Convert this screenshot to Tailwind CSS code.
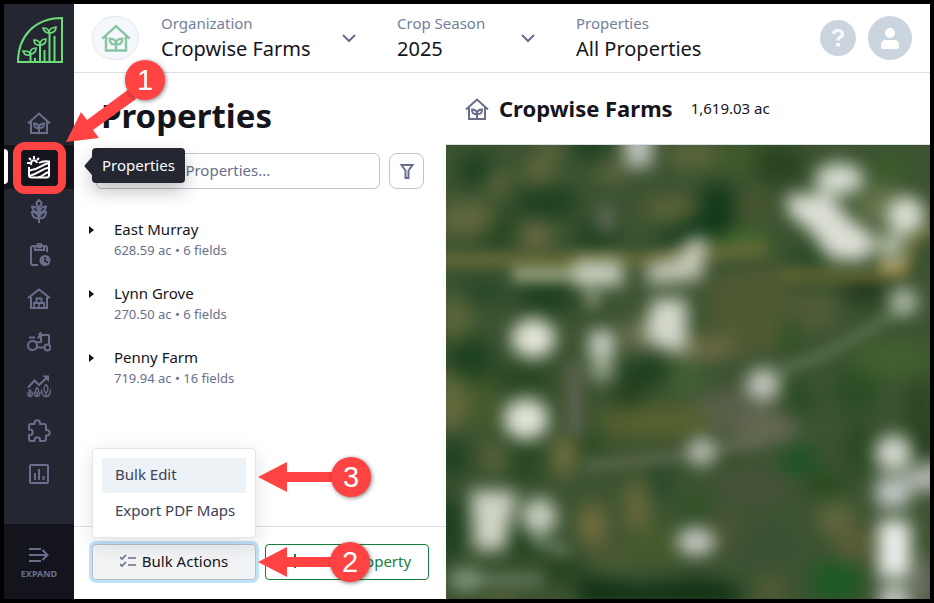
<!DOCTYPE html>
<html lang="en">
<head>
    <meta charset="UTF-8">
    <meta name="viewport" content="width=device-width, initial-scale=1.0">
    <title>Cropwise - Properties</title>
    <script src="https://cdn.jsdelivr.net/npm/@tailwindcss/browser@4"></script>
</head>
<body class="flex h-screen overflow-hidden border-4 border-black bg-white font-['Noto_Sans',sans-serif] text-[15px] text-[#14151c]">
    <!-- Shared icons -->
    <svg class="hidden">
        <symbol id="home" viewBox="0 0 24 24">
            <g fill="none" stroke="currentColor" stroke-width="2">
                <path d="M1 12.500 12 2.500l11 10M4 10.500V22h16V10.500"/>
                <path d="M12 22v-5M12 17c-4 .5-5-1.500-5-4.500 3.500 0 5 1 5 4.500zM12 17c4 .5 5-1.500 5-4.500-3.500 0-5 1-5 4.500z"/>
            </g>
        </symbol>
        <symbol id="arrow-left" viewBox="0 0 90 30">
            <path d="M0 15 29 0v10h50v10H29v10z" fill="currentColor"/>
        </symbol>
    </svg>

    <!-- Sidebar -->
    <nav class="flex w-[70px] shrink-0 flex-col bg-[#242631] text-[#696f8b]">
        <a href="#" aria-label="Cropwise" class="flex h-[97px] justify-center pt-3">
            <svg class="size-12" viewBox="0 0 48 48" fill="none" stroke="#6bdc7a" stroke-width="2">
                <path d="M3 46C3 20 20 2 47 2v44z"/>
                <path d="M15.500 46V37M20 46v-4M25 46V27M29.500 46V34M34.500 46V17M39.500 46V20" stroke-width="2"/>
                <path d="M15 39c-4 1-6-1-7-4 4 0 7 0 7 4zM15 38c0-4 2-6 6-6 0 4-2 6-6 6zM25 29c-4 1-6-2-6-5 4 0 6 1 6 5zM25 29c0-4 2-6 6-6 0 4-2 6-6 6zM34 17c-4 0-5-2-6-5 4 0 6 1 6 5zM34 17c0-4 2-5 7-6 0 4-2 6-7 6z" stroke-width="1.700"/>
            </svg>
        </a>
        <a href="#" aria-label="Home" class="flex h-11 items-center justify-center"><svg class="size-6"><use href="#home"/></svg></a>

        <div class="relative h-11">
            <a href="#" aria-label="Properties" aria-current="page" class="flex h-11 items-center justify-center bg-[#14151c] text-white">
                <span class="absolute top-1 left-0 h-[35px] w-1 rounded-r bg-white"></span>
                <svg class="size-6" viewBox="0 0 24 24" fill="none" stroke="currentColor" stroke-width="2">
                    <path d="M2 12v8q0 2.500 2.500 2.500h15q2.500 0 2.500-2.500V6.500q-6-1-10 1.500"/>
                    <path d="M2.500 15.500C12 14.500 14 9.500 22 8M2.500 21C12 18.500 14 14 22 12.500M11 22.500c5-1 7-5 11-5.500"/>
                    <path d="M4.500 10a3 3 0 1 1 5.500-2"/>
                    <path d="M7 1v3M0 8h3M2 3l2 2M12 3l-2 2" stroke-width="2"/>
                </svg>
            </a>
            <div role="tooltip" class="absolute top-[3px] left-[88px] z-20 flex h-[35px] items-center rounded bg-[#242631] px-[10px] text-white shadow-[0_8px_18px_rgba(0,0,0,0.25)]">
                <svg class="absolute top-2 -left-2 h-5 w-2" viewBox="0 0 8 20" fill="#242631"><path d="M8 1 1 9q-1 1 0 2l7 8z"/></svg>
                Properties
            </div>
            <!-- Step 1 -->
            <div class="absolute -top-[3px] left-[9px] z-30 h-[52px] w-[53px] rounded-xl border-8 border-[#ff4343]"></div>
            <svg class="absolute -top-[90px] left-[60px] z-30 h-[90px] w-[106px]" viewBox="0 0 106 90" fill="#ff4343">
                <path d="M2 87 17 57l6 8 42-31 7 10-43 31 6 8z"/>
                <circle cx="81" cy="25" r="20" class="drop-shadow-[1px_1px_2px_rgba(0,0,0,0.5)]"/>
                <text x="81" y="35" text-anchor="middle" fill="white" class="font-['Liberation_Sans',sans-serif] text-[29px]">1</text>
            </svg>
        </div>

        <a href="#" aria-label="Crops" class="flex h-11 items-center justify-center">
            <svg class="size-6" viewBox="0 0 24 24" fill="none" stroke="currentColor" stroke-width="2">
                <path d="M12 24V8M12 8q-5-3 0-7 5 4 0 7M12 13.500q-6 0-7-6 6 0 7 6q1-6 7-6-1 6-7 6M12 19.500q-7 0-7-6.500 6 0 7 6.500q1-6.500 7-6.500 0 6.500-7 6.500"/>
            </svg>
        </a>
        <a href="#" aria-label="Tasks" class="flex h-11 items-center justify-center">
            <svg class="size-6" viewBox="0 0 24 24" fill="none" stroke="currentColor" stroke-width="2">
                <path d="M11 22H6q-2 0-2-2V5q0-2 2-2h12q2 0 2 2v4"/>
                <path d="M8 3v4h9V3"/><circle cx="12.500" cy="2.500" r="2"/>
                <circle cx="18" cy="17.500" r="5.500" fill="currentColor" stroke="none"/>
                <path d="M18 14v4l3 1.500" stroke="#242631" stroke-width="1.500"/>
            </svg>
        </a>
        <a href="#" aria-label="Inventory" class="flex h-11 items-center justify-center">
            <svg class="size-6" viewBox="0 0 24 24" fill="none" stroke="currentColor" stroke-width="2">
                <path d="M1 11 12 2.500l11 8.500M4 10v11h16V10"/>
                <path d="M7 21v-5h10v5M9.500 16v-4.500h5V16M12 16v5" stroke-width="1.800"/>
            </svg>
        </a>
        <a href="#" aria-label="Equipment" class="flex h-11 items-center justify-center">
            <svg class="size-6" viewBox="0 0 24 24" fill="none" stroke="currentColor" stroke-width="2">
                <circle cx="5.500" cy="14.500" r="4.500"/><circle cx="20.500" cy="16.500" r="3"/>
                <path d="M2 6.500h6M7 9.500q2 2.500 7 1.500V4h7q1 0 1 1v8M10 16.500h7.500M10.500 6.500h2V3l2-1.500"/>
            </svg>
        </a>
        <a href="#" aria-label="Yield" class="flex h-11 items-center justify-center">
            <svg class="size-6" viewBox="0 0 24 24" fill="none" stroke="currentColor" stroke-width="2">
                <path d="m1 12.500 6.500-7L12 10l8.500-8"/><path d="M15.500.500H22V7z" fill="currentColor" stroke="none"/>
                <path d="M3 22v-3M3 14.500q-2 2 0 5 2-3 0-5M.5 17.500q0 4 2.500 4t2.500-4M10 22v-4M10 12.500q-3 3 0 7 3-4 0-7M7 16.500q0 5 3 5t3-5M19 22v-4M19 9.500q-4 4 0 9 4-5 0-9M14.500 14.500q0 7 4.500 7t4.500-7" stroke-width="1.300"/>
            </svg>
        </a>
        <a href="#" aria-label="Integrations" class="flex h-11 items-center justify-center">
            <svg class="size-6" viewBox="0 0 24 24" fill="none" stroke="currentColor" stroke-width="2" stroke-linejoin="round">
                <path d="M7.500 5V4a2.700 2.700 0 0 1 5.400 0v1H17q2 0 2 2v4h1a2.700 2.700 0 0 1 0 5.400h-1V20q0 2-2 2h-4v-1a2.700 2.700 0 0 0-5.400 0v1H4q-2 0-2-2v-4h1a2.700 2.700 0 0 0 0-5.400H2V7q0-2 2-2z"/>
            </svg>
        </a>
        <a href="#" aria-label="Reports" class="flex h-11 items-center justify-center">
            <svg class="size-6" viewBox="0 0 24 24" fill="none" stroke="currentColor" stroke-width="2">
                <rect x="3" y="2" width="18" height="18" rx="1"/><path d="M8 17v-7M12 17V6M16.500 17v-4"/>
            </svg>
        </a>
        <button class="mt-auto flex h-[75px] flex-col items-center bg-[#14151c] pt-[21px] text-[9px] leading-3 font-bold">
            <svg class="mb-[3px] h-5 w-6" viewBox="0 0 24 20" fill="none" stroke="currentColor" stroke-width="2">
                <path d="M2 4h12M2 10h18M2 16h12M15.500 5l5 5-5 5"/>
            </svg>
            EXPAND
        </button>
    </nav>

    <div class="flex min-w-0 flex-1 flex-col">
        <!-- Top bar -->
        <header class="flex h-[69px] shrink-0 items-center border-b border-[#dddfe6] pr-[18px] pl-[18px]">
            <div class="flex h-11 w-[47px] shrink-0 items-center justify-center rounded-full border border-[#e3e7ef] bg-[#f4f7fc] text-[#8cc5a2]">
                <svg class="size-[30px]"><use href="#home"/></svg>
            </div>
            <button class="ml-[22px] flex w-[196px] items-center justify-between text-left">
                <span><span class="block leading-[22px] text-[#74809a]">Organization</span><span class="block text-[20px] leading-[30px]">Cropwise Farms</span></span>
                <svg class="h-4 w-4" viewBox="0 0 16 16" fill="none" stroke="#696f8b" stroke-width="2"><path d="m2 5 6 6 6-6"/></svg>
            </button>
            <button class="ml-10 flex w-[139px] items-center justify-between text-left">
                <span><span class="block leading-[22px] text-[#74809a]">Crop Season</span><span class="block text-[20px] leading-[30px]">2025</span></span>
                <svg class="h-4 w-4" viewBox="0 0 16 16" fill="none" stroke="#696f8b" stroke-width="2"><path d="m2 5 6 6 6-6"/></svg>
            </button>
            <button class="ml-10 text-left">
                <span class="block leading-[22px] text-[#74809a]">Properties</span><span class="block text-[20px] leading-[30px]">All Properties</span>
            </button>
            <button aria-label="Help" class="ml-auto flex size-9 items-center justify-center rounded-full bg-[#cbd5e0]">
                <svg class="size-5" viewBox="0 0 20 20" fill="none" stroke="#f7fafc" stroke-width="3.200"><path d="M5.500 6q.5-3.500 4.500-3.500t4.500 3.500q0 2-2.300 3.200T10 12.500"/><path d="M10 15v3.500" stroke-width="4"/></svg>
            </button>
            <button aria-label="Account" class="ml-3 flex size-11 items-center justify-center rounded-full bg-[#cbd5e0]">
                <svg class="size-6" viewBox="0 0 24 24" fill="white"><circle cx="12" cy="7" r="5"/><path d="M3 20v-1q0-5 5-5h8q5 0 5 5v1q0 3-2 3H5q-2 0-2-3z"/></svg>
            </button>
        </header>

        <div class="flex min-h-0 flex-1">
            <!-- Property list -->
            <section class="flex w-[372px] shrink-0 flex-col">
                <h1 class="pt-5 pl-[27px] text-[33px] leading-[46px] font-bold">Properties</h1>
                <div class="mt-[14px] flex gap-[9px] pr-[22px] pl-[22px]">
                    <input type="text" aria-label="Search properties" placeholder="Search Properties..." class="h-9 min-w-0 flex-1 rounded-md border border-[#bfc3d2] pb-[2px] pl-[37px] placeholder:text-[#696f8b]">
                    <button aria-label="Filter" class="flex h-9 w-[35px] items-center justify-center rounded-lg border border-[#bfc3d2]">
                        <svg class="size-4" viewBox="0 0 16 16" fill="none" stroke="#696f8b" stroke-width="2"><path d="M2.500 2h11L9.500 7.500V15h-3V7.500z"/></svg>
                    </button>
                </div>
                <ul class="mt-[29px] flex flex-col gap-[22px] pl-[14px]">
                    <li class="flex gap-[18px]">
                        <svg class="mt-2 h-2 w-2" viewBox="0 0 8 8"><path d="M1 0l5 4-5 4z" fill="#14151c"/></svg>
                        <div><p class="leading-[22px]">East Murray</p><p class="text-[13px] leading-5 text-[#696f8b]">628.59 ac • 6 fields</p></div>
                    </li>
                    <li class="flex gap-[18px]">
                        <svg class="mt-2 h-2 w-2" viewBox="0 0 8 8"><path d="M1 0l5 4-5 4z" fill="#14151c"/></svg>
                        <div><p class="leading-[22px]">Lynn Grove</p><p class="text-[13px] leading-5 text-[#696f8b]">270.50 ac • 6 fields</p></div>
                    </li>
                    <li class="flex gap-[18px]">
                        <svg class="mt-2 h-2 w-2" viewBox="0 0 8 8"><path d="M1 0l5 4-5 4z" fill="#14151c"/></svg>
                        <div><p class="leading-[22px]">Penny Farm</p><p class="text-[13px] leading-5 text-[#696f8b]">719.94 ac • 16 fields</p></div>
                    </li>
                </ul>

                <div class="mt-auto grid h-[73px] grid-cols-2 items-start gap-[9px] border-t border-[#dddfe6] pt-[17px] pr-[17px] pl-[18px]">
                    <div class="relative">
                        <button aria-expanded="true" class="flex h-9 w-full items-center justify-center gap-[6px] rounded border border-[#b9bfcd] bg-[#f2f3f5] pb-[2px] ring-3 ring-[#bee3f8]">
                            <svg class="h-4 w-4" viewBox="0 0 16 16" fill="none" stroke="#696f8b" stroke-width="1.600"><path d="m0 4 2 2 4-4M0 11l2 2 4-4M8 5h8M8 12h8"/></svg>
                            Bulk Actions
                        </button>
                        <div role="menu" class="absolute bottom-[42px] left-0 z-10 w-full rounded border border-[#e2e5eb] bg-white px-[9px] pt-[9px] pb-2 text-[#3c4256] shadow-[0_6px_22px_rgba(0,0,0,0.12)]">
                            <button role="menuitem" class="flex h-[35px] w-full items-center bg-[#edf2f7] pb-[2px] pl-[13px]">Bulk Edit</button>
                            <button role="menuitem" class="flex h-9 w-full items-center pb-[2px] pl-[13px] whitespace-nowrap">Export PDF Maps</button>
                        </div>
                        <!-- Step 3 -->
                        <div class="absolute -top-[87px] left-[166px] z-30 flex h-10 items-center text-[#ff4343]">
                            <svg class="h-[30px] w-[90px]"><use href="#arrow-left"/></svg>
                            <span class="-ml-[17px] flex size-10 items-center justify-center rounded-full bg-[#ff4343] font-['Liberation_Sans',sans-serif] text-[29px] leading-9 text-white shadow-[1px_1px_4px_rgba(0,0,0,0.5)]">3</span>
                        </div>
                        <!-- Step 2 -->
                        <div class="absolute -top-[2px] left-[166px] z-30 flex h-10 items-center text-[#ff4343]">
                            <svg class="h-[30px] w-[90px]"><use href="#arrow-left"/></svg>
                            <span class="-ml-[18px] flex size-10 items-center justify-center rounded-full bg-[#ff4343] font-['Liberation_Sans',sans-serif] text-[29px] leading-9 text-white shadow-[1px_1px_4px_rgba(0,0,0,0.5)]">2</span>
                        </div>
                    </div>
                    <button class="flex h-9 items-center justify-center gap-3 rounded border border-[#14803c] pb-[2px] pl-1 text-[#14803c]">
                        <svg class="h-4 w-4" viewBox="0 0 16 16" stroke="currentColor" stroke-width="2"><path d="M8 1v14M1 8h14"/></svg>
                        New Property
                    </button>
                </div>
            </section>

            <!-- Map -->
            <main class="flex min-w-0 flex-1 flex-col">
                <div class="flex h-[72px] shrink-0 items-center border-b border-[#dddfe6] pl-[19px]">
                    <svg class="size-6 text-[#696f8b]"><use href="#home"/></svg>
                    <h2 class="ml-[10px] text-[22px] font-bold">Cropwise Farms</h2>
                    <span class="ml-[18px]">1,619.03 ac</span>
                </div>
                <svg role="img" aria-label="Satellite map" class="min-h-0 w-full flex-1 bg-[#39512f]" viewBox="0 0 1452 1362" preserveAspectRatio="xMidYMid slice">
                    <defs>
                        <filter id="soft" x="-20%" y="-20%" width="140%" height="140%" color-interpolation-filters="sRGB"><feGaussianBlur stdDeviation="28"/></filter>
                        <filter id="road" x="-20%" y="-20%" width="140%" height="140%" color-interpolation-filters="sRGB"><feGaussianBlur stdDeviation="19"/></filter>
                        <filter id="bright" x="-20%" y="-20%" width="140%" height="140%" color-interpolation-filters="sRGB"><feGaussianBlur stdDeviation="26"/></filter>
                    </defs>
                    <rect width="1452" height="1362" fill="#3d5331"/>
                    <g filter="url(#soft)">
                        <!-- woodland -->
                        <g fill="#1c401f">
                            <ellipse cx="90" cy="75" rx="55" ry="50"/><ellipse cx="430" cy="5" rx="60" ry="40"/>
                            <path d="M770 120h100v120l-60 50H600l160-80z" fill="#12381a"/>
                            <ellipse cx="300" cy="170" rx="100" ry="50"/><ellipse cx="450" cy="270" rx="70" ry="35"/>
                            <ellipse cx="150" cy="250" rx="60" ry="60" fill="#24451f"/>
                            <ellipse cx="110" cy="440" rx="80" ry="40" fill="#27482a"/><ellipse cx="300" cy="460" rx="90" ry="45"/>
                            <ellipse cx="70" cy="640" rx="70" ry="70"/><ellipse cx="230" cy="700" rx="90" ry="40" fill="#264620"/>
                            <ellipse cx="600" cy="680" rx="80" ry="45"/><ellipse cx="550" cy="750" rx="50" ry="50" fill="#25401e"/>
                            <ellipse cx="20" cy="940" rx="45" ry="60"/><ellipse cx="230" cy="950" rx="70" ry="70" fill="#294922"/>
                            <ellipse cx="10" cy="1150" rx="50" ry="100"/><ellipse cx="230" cy="1190" rx="60" ry="60" fill="#264522"/>
                            <path d="M400 1290l180 30 180-20 120 20v60H400z" fill="#0e3015"/>
                            <ellipse cx="1255" cy="435" rx="65" ry="45" fill="#23391c"/><ellipse cx="1000" cy="60" rx="80" ry="60" fill="#2a431f"/>
                            <ellipse cx="1090" cy="330" rx="70" ry="35" fill="#2a4b26"/><ellipse cx="1015" cy="555" rx="35" ry="60" fill="#28521f"/>
                            <ellipse cx="1060" cy="760" rx="45" ry="55" fill="#294c25"/><ellipse cx="1230" cy="740" rx="70" ry="70" fill="#2a4e25"/>
                            <ellipse cx="1420" cy="790" rx="40" ry="90" fill="#2a4620"/><ellipse cx="1240" cy="910" rx="50" ry="80" fill="#2b4a23"/>
                            <ellipse cx="1060" cy="945" rx="60" ry="45" fill="#1d5424"/><ellipse cx="1140" cy="1020" rx="60" ry="40" fill="#294a20"/>
                            <ellipse cx="1170" cy="1310" rx="80" ry="60" fill="#1c5a24"/><ellipse cx="1440" cy="900" rx="25" ry="50" fill="#1c351a"/>
                            <ellipse cx="640" cy="1020" rx="45" ry="60" fill="#294b2a"/><ellipse cx="750" cy="1090" rx="45" ry="35" fill="#2c5124"/>
                            <ellipse cx="350" cy="1280" rx="60" ry="40" fill="#25421f"/><ellipse cx="430" cy="900" rx="40" ry="30" fill="#29491f"/>
                        </g>
                        <!-- pasture and bare ground -->
                        <g fill="#62683e">
                            <ellipse cx="60" cy="220" rx="90" ry="50"/><ellipse cx="30" cy="520" rx="50" ry="70" fill="#5b663b"/>
                            <ellipse cx="280" cy="80" rx="45" ry="45"/><ellipse cx="320" cy="10" rx="45" ry="30" fill="#59643a"/>
                            <ellipse cx="155" cy="115" rx="35" ry="35"/><ellipse cx="270" cy="275" rx="45" ry="45" fill="#6c6c43"/>
                            <ellipse cx="500" cy="80" rx="45" ry="30"/><ellipse cx="740" cy="30" rx="80" ry="40" fill="#5d673c"/>
                            <ellipse cx="870" cy="40" rx="60" ry="60" fill="#40592b"/><ellipse cx="670" cy="190" rx="80" ry="35" fill="#5c6438"/>
                            <ellipse cx="920" cy="180" rx="60" ry="50" fill="#475630"/><ellipse cx="890" cy="290" rx="90" ry="25" fill="#49712d"/>
                            <path d="M790 400l200-50 60 110-60 160-140 20-60-100z" fill="#4f5a34"/><ellipse cx="1110" cy="500" rx="70" ry="60" fill="#515c38"/>
                            <ellipse cx="770" cy="610" rx="100" ry="30" fill="#766f4b"/><ellipse cx="570" cy="570" rx="50" ry="50" fill="#686e4c"/>
                            <ellipse cx="15" cy="760" rx="50" ry="80" fill="#626a3b"/><ellipse cx="10" cy="825" rx="30" ry="25" fill="#7d7345"/>
                            <ellipse cx="110" cy="780" rx="50" ry="80" fill="#465b2d"/><ellipse cx="640" cy="830" rx="190" ry="50" fill="#58612f"/>
                            <ellipse cx="720" cy="700" rx="55" ry="60" fill="#426035"/><ellipse cx="150" cy="940" rx="35" ry="40"/>
                            <ellipse cx="355" cy="930" rx="35" ry="65" fill="#72713f"/><ellipse cx="440" cy="1140" rx="45" ry="65" fill="#726d3e"/>
                            <ellipse cx="575" cy="1090" rx="40" ry="90" fill="#68693b"/><ellipse cx="500" cy="1240" rx="60" ry="40" fill="#4c5b34"/>
                            <ellipse cx="620" cy="1200" rx="80" ry="60" fill="#465b2d"/><ellipse cx="1170" cy="1120" rx="60" ry="50" fill="#60673e"/>
                            <ellipse cx="1230" cy="1200" rx="70" ry="50" fill="#5a5c37"/><ellipse cx="1340" cy="640" rx="120" ry="60" fill="#41602f"/>
                            <ellipse cx="975" cy="1330" rx="40" ry="50" fill="#545d34"/><ellipse cx="840" cy="1160" rx="60" ry="60" fill="#4b5534"/>
                            <ellipse cx="920" cy="1030" rx="110" ry="50" fill="#47523a"/><ellipse cx="960" cy="1210" rx="100" ry="80" fill="#3c5133"/>
                            <ellipse cx="1430" cy="1310" rx="40" ry="80" fill="#696e60"/><ellipse cx="170" cy="1350" rx="50" ry="20" fill="#5b663b"/>
                            <ellipse cx="1300" cy="180" rx="70" ry="60" fill="#65754b"/><ellipse cx="1330" cy="70" rx="70" ry="40" fill="#3b5b2c"/>
                            <path d="M740 760l200-50 60 100 60 60-160 50-80-50z" fill="#59604a"/>
                            <ellipse cx="970" cy="850" rx="85" ry="45" fill="#686a54"/>
                        </g>
                    </g>
                    <!-- roads -->
                    <g filter="url(#road)" fill="none" stroke-width="26">
                        <path d="M-40 345H600L960 310" stroke="#686b37" stroke-width="36"/>
                        <path d="M1000 390h370l40-130h80" stroke="#65672f" stroke-width="32"/>
                        <path d="M200 388h220" stroke="#93a07e" stroke-width="42"/>
                        <path d="M420 965 750 925 950 880" stroke="#697057" stroke-width="22"/>
                        <path d="M990 680q180-50 390-200" stroke="#5d7551"/>
                        <path d="M385 650v220" stroke="#59614e" stroke-width="50"/>
                        <path d="M480 180v80" stroke="#56624e" stroke-width="55"/>
                        <path d="M20 1305h270M260 1180l110 40" stroke="#5d7457" stroke-width="34"/>
                        <path d="M440 430v60" stroke="#758466" stroke-width="44"/>
                        <path d="M1300 360h80" stroke="#a3935d" stroke-width="44"/>
                    </g>
                    <!-- roofs -->
                    <g filter="url(#bright)" fill="#e2e4d9" opacity="0.9">
                        <rect x="536" y="-60" width="82" height="126" fill="#cfd1cc"/>
                        <ellipse cx="1180" cy="102" rx="74" ry="48" fill="#e6ece2"/>
                        <path d="M1022 150l123-5 70 80 75 50-30 72-105-5-65-88-65-50z" fill="#eeeee7"/>
                        <ellipse cx="1380" cy="212" rx="57" ry="57" fill="#ebeee6"/><ellipse cx="1335" cy="305" rx="46" ry="42" fill="#bdc5ac"/>
                        <path d="M385 348h140l10 72-140 5z" fill="#dde0d3"/>
                        <path d="M600 360l100-25 35-55h50l-20 125-160 12z" fill="#d6d5c7"/>
                        <path d="M620 462h102v158l-75-10-55-32z" fill="#e5e7dd"/>
                        <ellipse cx="262" cy="580" rx="66" ry="58" fill="#f6f6ec"/><ellipse cx="240" cy="822" rx="67" ry="61" fill="#f2f4eb"/>
                        <rect x="430" y="557" width="74" height="80" rx="10" fill="#dfe3dc"/><rect x="437" y="630" width="60" height="76" rx="10" fill="#acb69f"/>
                        <ellipse cx="952" cy="718" rx="50" ry="48" fill="#d2d4ce"/><ellipse cx="767" cy="920" rx="42" ry="43" fill="#c2c6bd"/>
                        <ellipse cx="750" cy="1190" rx="58" ry="41" fill="#d6d8d3"/><ellipse cx="1373" cy="470" rx="42" ry="42" fill="#bcc5b8"/>
                        <path d="M75 1035l140 5-25 92-15 82H86z" fill="#e0e2d7"/><ellipse cx="280" cy="1115" rx="52" ry="56" fill="#d6dcd0"/>
                        <ellipse cx="1342" cy="925" rx="54" ry="54" fill="#e5e7e2"/><rect x="1290" y="998" width="100" height="90" rx="15" fill="#cfd3d6"/>
                        <path d="M1380 976l110-35v98h-110z" fill="#bfc2be"/>
                        <rect x="1296" y="1126" width="98" height="172" rx="15" fill="#ffffff"/><rect x="1300" y="1322" width="90" height="90" fill="#d2d5d1"/>
                        <ellipse cx="60" cy="1303" rx="44" ry="30" fill="#8b9e82"/>
                    </g>
                </svg>
            </main>
        </div>
    </div>
</body>
</html>
